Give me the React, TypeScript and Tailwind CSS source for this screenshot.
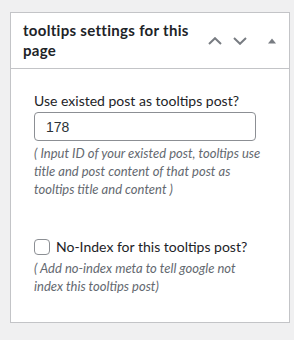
export default function App() {
  return (
    <div className="min-h-[340px] w-[294px] bg-[#f0f0f1] pt-3 pl-[10px] pr-1 font-['Lato',sans-serif]">
      <div className="w-[280px] border border-[#c3c4c7] bg-white">
        <div className="flex items-center border-b border-[#c3c4c7]">
          <h2 className="flex-1 py-2 pl-3 text-[15px] font-bold leading-[19.6px] tracking-[0.3px] text-[#1d2327]">
            tooltips settings for this
            <br />
            page
          </h2>
          <div className="flex items-center pr-[13px]">
            <svg width="14" height="8" viewBox="0 0 14 8" className="mr-[11px]" fill="none" stroke="#787c82" strokeWidth="2">
              <path d="M1 7 L7 1.2 L13 7" />
            </svg>
            <svg width="14" height="8" viewBox="0 0 14 8" className="mr-[21px]" fill="none" stroke="#787c82" strokeWidth="2">
              <path d="M1 1 L7 6.8 L13 1" />
            </svg>
            <svg width="8" height="6" viewBox="0 0 8 6">
              <path d="M0 5.5 L4 0.5 L8 5.5 Z" fill="#787c82" />
            </svg>
          </div>
        </div>
        <div className="pt-[22px] pb-[27px] pl-[23px] pr-[33px]">
          <label className="block whitespace-nowrap text-[14px] leading-[20px] text-[#1d2327]">Use existed post as tooltips post?</label>
          <input
            type="text"
            defaultValue="178"
            className="mt-[1px] h-[29px] w-[222px] rounded-[4px] border border-[#8c8f94] px-[11px] font-['Liberation_Sans',sans-serif] text-[14px] text-[#2c3338] outline-none"
          />
          <p className="mt-[3px] whitespace-nowrap text-[13px] italic leading-[18px] text-[#646970]">
            ( Input ID of your existed post, tooltips use
            <br />
            title and post content of that post as
            <br />
            tooltips title and content )
          </p>
          <div className="mt-[39px] flex items-center">
            <span className="mr-[6px] inline-block h-[16px] w-[16px] rounded-[4px] border border-[#8c8f94] bg-white" />
            <span className="whitespace-nowrap text-[14px] leading-[20px] text-[#1d2327]">No-Index for this tooltips post?</span>
          </div>
          <p className="mt-[2px] whitespace-nowrap text-[13px] italic leading-[18px] text-[#646970]">
            ( Add no-index meta to tell google not
            <br />
            index this tooltips post)
          </p>
        </div>
      </div>
    </div>
  );
}
